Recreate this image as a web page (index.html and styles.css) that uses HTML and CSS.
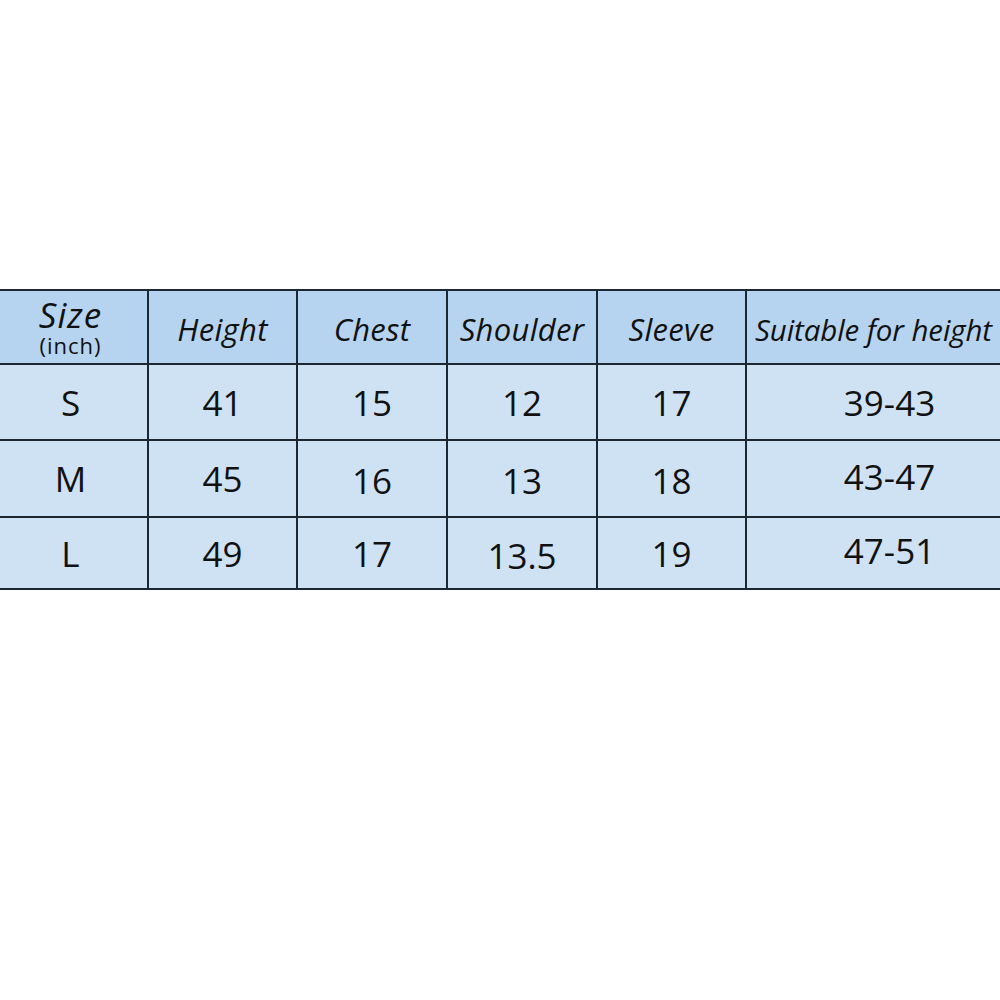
FILE: index.html
```
<!DOCTYPE html>
<html lang="en">
<head>
<meta charset="utf-8">
<title>Size chart</title>
<link rel="stylesheet" href="styles.css">
</head>
<body>
<main class="page">
  <div class="chart" role="table" aria-label="Size chart">
    <div class="cell head size-head first" role="columnheader"><span class="size-main">Size</span><span class="size-unit">(inch)</span></div>
    <div class="cell head" role="columnheader">Height</div>
    <div class="cell head" role="columnheader">Chest</div>
    <div class="cell head" role="columnheader">Shoulder</div>
    <div class="cell head" role="columnheader">Sleeve</div>
    <div class="cell head head-wide" role="columnheader">Suitable for height</div>

    <div class="cell body first" role="cell">S</div>
    <div class="cell body" role="cell">41</div>
    <div class="cell body" role="cell">15</div>
    <div class="cell body" role="cell">12</div>
    <div class="cell body" role="cell">17</div>
    <div class="cell body last" role="cell">39-43</div>

    <div class="cell body first" role="cell">M</div>
    <div class="cell body" role="cell">45</div>
    <div class="cell body lower" role="cell">16</div>
    <div class="cell body lower" role="cell">13</div>
    <div class="cell body lower" role="cell">18</div>
    <div class="cell body last upper" role="cell">43-47</div>

    <div class="cell body first" role="cell">L</div>
    <div class="cell body" role="cell">49</div>
    <div class="cell body" role="cell">17</div>
    <div class="cell body lower" role="cell">13.5</div>
    <div class="cell body" role="cell">19</div>
    <div class="cell body last upper" role="cell">47-51</div>
  </div>
</main>
</body>
</html>
```
FILE: styles.css
```
html, body {
  margin: 0;
  padding: 0;
  background: #ffffff;
}

.page {
  padding-top: 289px;
  width: 1000px;
  height: 711px;
  box-sizing: border-box;
}

.chart {
  display: grid;
  grid-template-columns: 147px 147px 148px 148px 147px 253px;
  grid-template-rows: 72px 74px 75px 70px;
  column-gap: 2px;
  row-gap: 2px;
  padding: 2px 0;
  background: #1d2731;
  font-family: "Open Sans", "Liberation Sans", sans-serif;
  color: #111111;
}

.cell {
  display: flex;
  align-items: center;
  justify-content: center;
  white-space: nowrap;
  box-sizing: border-box;
}

.head {
  background: #b6d4ef;
  font-style: italic;
  font-size: 31px;
  letter-spacing: 0.3px;
  padding-top: 4px;
}

.head-wide {
  font-size: 29.5px;
  letter-spacing: -0.1px;
}

.size-head {
  flex-direction: column;
  padding-top: 0;
}

.size-main {
  font-size: 35px;
  line-height: 34px;
  letter-spacing: 1px;
}

.size-unit {
  font-style: normal;
  font-size: 22px;
  line-height: 22px;
  letter-spacing: 1px;
  margin-top: 2px;
}

.body {
  background: #cfe2f3;
  font-size: 35px;
}

.first {
  padding-right: 6px;
}

.last {
  padding-left: 32px;
}

.lower {
  padding-top: 4px;
}

.upper {
  padding-bottom: 5px;
}
```
